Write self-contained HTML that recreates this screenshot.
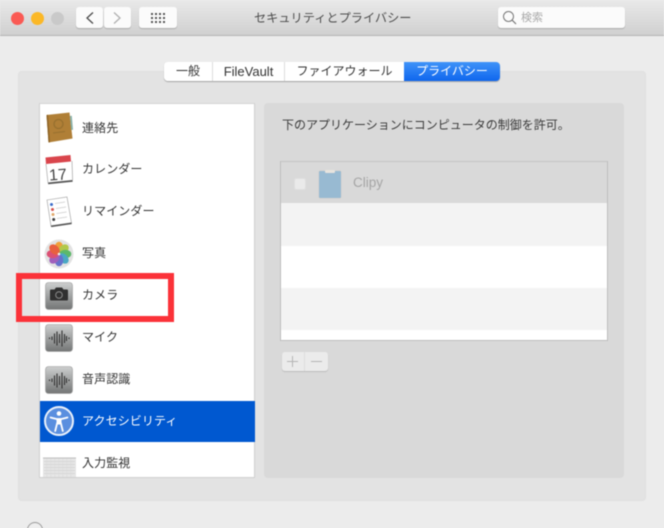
<!DOCTYPE html>
<html lang="ja">
<head>
<meta charset="utf-8">
<style>
html,body{margin:0;padding:0}
body{width:664px;height:528px;overflow:hidden;background:#ececec;position:relative;font-family:"Liberation Sans","Noto Sans CJK JP",sans-serif;color:#333;filter:blur(.45px)}
.a{position:absolute;box-sizing:border-box}
.t{position:absolute;white-space:nowrap;line-height:16px}
.btn{position:absolute;background:#fbfbfb;border-radius:3px;box-shadow:0 1px 1px rgba(0,0,0,.2)}
.lbl{position:absolute;left:82px;font-size:12px;line-height:16px;color:#333;white-space:nowrap;letter-spacing:.1px}
.seg{position:absolute;top:62px;height:19px;font-size:12px;line-height:19px;text-align:center;color:#333;background:#fff;border-right:1px solid #dcdcdc;box-sizing:border-box}
svg{position:absolute;overflow:visible}
</style>
</head>
<body>
<!-- title bar -->
<div class="a" style="left:0;top:0;width:664px;height:36px;background:linear-gradient(#e9e9e9,#d0d0d0);border-bottom:1px solid #b3b3b3"></div>
<div class="a" style="left:11px;top:12px;width:13px;height:13px;border-radius:50%;background:#fa5a54"></div>
<div class="a" style="left:31px;top:12px;width:13px;height:13px;border-radius:50%;background:#fbb827"></div>
<div class="a" style="left:51px;top:12px;width:13px;height:13px;border-radius:50%;background:#c9c9c9"></div>
<div class="btn" style="left:76px;top:7px;width:27px;height:21px"></div>
<div class="btn" style="left:104px;top:7px;width:27px;height:21px"></div>
<div class="btn" style="left:139px;top:7px;width:38px;height:21px"></div>
<svg style="left:0;top:0" width="200" height="36">
<path d="M93 12.5L87 18l6 5.5" fill="none" stroke="#4a4a4a" stroke-width="1.3"/>
<path d="M114 12.5l6 5.5-6 5.5" fill="none" stroke="#b0b0b0" stroke-width="1.3"/>
<g fill="#555">
<rect x="151" y="13" width="2" height="2"/><rect x="155" y="13" width="2" height="2"/><rect x="159" y="13" width="2" height="2"/><rect x="163" y="13" width="2" height="2"/>
<rect x="151" y="17" width="2" height="2"/><rect x="155" y="17" width="2" height="2"/><rect x="159" y="17" width="2" height="2"/><rect x="163" y="17" width="2" height="2"/>
<rect x="151" y="21" width="2" height="2"/><rect x="155" y="21" width="2" height="2"/><rect x="159" y="21" width="2" height="2"/><rect x="163" y="21" width="2" height="2"/>
</g>
</svg>
<div class="t" style="left:254px;top:10px;font-size:12.2px;color:#4c4c4c">セキュリティとプライバシー</div>
<div class="btn" style="left:498px;top:7px;width:127px;height:21px"></div>
<svg style="left:0;top:0" width="664" height="36">
<circle cx="508.5" cy="16.5" r="5" fill="none" stroke="#777" stroke-width="1"/>
<path d="M512 20l4 4" stroke="#777" stroke-width="1.2"/>
</svg>
<div class="t" style="left:521px;top:10px;font-size:11px;color:#a8a8a8">検索</div>

<!-- main panel -->
<div class="a" style="left:18px;top:71px;width:628px;height:430px;background:#e3e3e3;border-radius:4px;border:1px solid #dfdfdf"></div>

<!-- tabs -->
<div class="a" style="left:164px;top:62px;width:336px;height:19px;border-radius:4px;box-shadow:0 1px 1px rgba(0,0,0,.28)"></div>
<div class="seg" style="left:164px;width:49px;border-radius:4px 0 0 4px">一般</div>
<div class="seg" style="left:213px;width:72px;font-size:13px">FileVault</div>
<div class="seg" style="left:285px;width:119px;border-right:0">ファイアウォール</div>
<div class="seg" style="left:404px;width:96px;border:0;border-radius:0 4px 4px 0;color:#fff;background:linear-gradient(#3f93f8,#0f66ee)">プライバシー</div>

<!-- list -->
<div class="a" style="left:39px;top:103px;width:216px;height:375px;background:#fff;border:1px solid #cfcfcf;border-top-color:#d4d4d4"></div>
<div class="a" style="left:40px;top:401px;width:215px;height:41px;background:#0058d0"></div>

<div class="lbl" style="top:120px">連絡先</div>
<div class="lbl" style="top:161px">カレンダー</div>
<div class="lbl" style="top:203px">リマインダー</div>
<div class="lbl" style="top:245px">写真</div>
<div class="lbl" style="top:287px">カメラ</div>
<div class="lbl" style="top:329px">マイク</div>
<div class="lbl" style="top:371px">音声認識</div>
<div class="lbl" style="top:413px;color:#fff">アクセシビリティ</div>
<div class="lbl" style="top:455px">入力監視</div>

<svg style="left:0;top:0" width="664" height="528">
<defs>
<linearGradient id="g" x1="0" y1="0" x2="0" y2="1"><stop offset="0" stop-color="#cdcfcf"/><stop offset="1" stop-color="#737575"/></linearGradient>
</defs>
<!-- contacts -->
<path d="M46.500 115l23-2.500 3 26-24 4z" fill="#b07f36"/>
<path d="M46.500 115l2 27.500 1.500-.3-2-27.500z" fill="#8e6428"/>
<circle cx="58.500" cy="124" r="4.500" fill="none" stroke="#97702f" stroke-width="1.300"/>
<path d="M53 133l12-1.500" stroke="#97702f" stroke-width="1"/>
<path d="M70 116l1.800-.2 1.200 14-1.800.2z" fill="#88b0a8"/>
<!-- calendar -->
<path d="M46 157l25-2 1.500 25-24.500 2.500z" fill="#fff"/>
<path d="M45.500 157.500l25-2.500.500 6.500-25 2.500z" fill="#d9454c"/>
<path d="M48 182.500l24.500-2.500.200 1.800-24.500 2.500z" fill="#555"/>
<path d="M46 164l2 19" stroke="#999" stroke-width=".6"/>
<path d="M72 161l.6 19" stroke="#999" stroke-width=".6"/>
<text x="49" y="180" font-size="16" fill="#444" font-family="Liberation Sans" transform="rotate(-4 59 175)">17</text>
<!-- reminders -->
<path d="M47 200l20-3 4.500 26-20.500 3z" fill="#fff" stroke="#999" stroke-width=".6"/>
<path d="M51 225.500l20.500-3 .2 1.600-20.500 3z" fill="#555"/>
<circle cx="51.500" cy="204.500" r="1.500" fill="#3a6bc9"/><circle cx="52.500" cy="209.500" r="1.500" fill="#d6544f"/><circle cx="53" cy="214.500" r="1.500" fill="#e0a86a"/><circle cx="53.700" cy="219.500" r="1.500" fill="#3f3f3f"/>
<path d="M55 203.500l10-1.500M56 208.500l10-1.500M56.500 213.500l10-1.500M57 218.500l10-1.500" stroke="#ccc" stroke-width=".7"/>
<!-- photos -->
<circle cx="59" cy="254" r="14.500" fill="#e2e2e2"/>
<g transform="translate(59 254)">
<ellipse cx="0" cy="-6.300" rx="4.300" ry="6" fill="#f0a03a"/>
<ellipse cx="0" cy="-6.300" rx="4.300" ry="6" fill="#b2c84a" transform="rotate(45)"/>
<ellipse cx="0" cy="-6.300" rx="4.300" ry="6" fill="#5cb86a" transform="rotate(90)"/>
<ellipse cx="0" cy="-6.300" rx="4.300" ry="6" fill="#4aa8c4" transform="rotate(135)"/>
<ellipse cx="0" cy="-6.300" rx="4.300" ry="6" fill="#6672cc" transform="rotate(180)"/>
<ellipse cx="0" cy="-6.300" rx="4.300" ry="6" fill="#a060bc" transform="rotate(225)"/>
<ellipse cx="0" cy="-6.300" rx="4.300" ry="6" fill="#dc5074" transform="rotate(270)"/>
<ellipse cx="0" cy="-6.300" rx="4.300" ry="6" fill="#e8603f" transform="rotate(315)"/>
<circle r="1.300" fill="#f4f0e8"/>
</g>
<!-- camera tile -->
<rect x="45.500" y="282.500" width="27" height="27" rx="3" fill="url(#g)" stroke="#9a9a9a" stroke-width=".6"/>
<path d="M51 289.500h3.500l1.500-2h6l1.500 2H67a1 1 0 0 1 1 1v9a1 1 0 0 1-1 1H51a1 1 0 0 1-1-1v-9a1 1 0 0 1 1-1z" fill="#303030"/>
<circle cx="59" cy="295" r="3.300" fill="#303030" stroke="#8d8d8d" stroke-width="1"/>
<!-- mic tile -->
<rect x="45.500" y="324.500" width="27" height="27" rx="3" fill="url(#g)" stroke="#9a9a9a" stroke-width=".6"/>
<path d="M49.500 337.500v1.500M52 336.500v3.500M54.500 333.500v10M57 331.500v14M59.500 334v9M62 330.500v16M64.500 334v9M66.500 336v5M69 337.500v1.500" stroke="#333" stroke-width="1.100"/>
<!-- voice tile -->
<rect x="45.500" y="366.500" width="27" height="27" rx="3" fill="url(#g)" stroke="#9a9a9a" stroke-width=".6"/>
<path d="M49.500 379.500v1.500M52 378.500v3.500M54.500 375.500v10M57 373.500v14M59.500 376v9M62 372.500v16M64.500 376v9M66.500 378v5M69 379.500v1.500" stroke="#333" stroke-width="1.100"/>
<!-- accessibility -->
<circle cx="59" cy="421" r="14" fill="#5a8fdf" stroke="#eaf1fb" stroke-width="2"/>
<circle cx="59" cy="413.500" r="2.300" fill="#fff"/>
<path d="M50.500 417.500l6 1.500h5l6-1.500" fill="none" stroke="#fff" stroke-width="1.700" stroke-linecap="round" stroke-linejoin="round"/>
<path d="M56.500 418.500h5v6h-5z" fill="#fff"/>
<path d="M57.200 423l-2 8M60.800 423l2 8" fill="none" stroke="#fff" stroke-width="1.800" stroke-linecap="round"/>
<!-- keyboard -->
<rect x="43" y="458" width="33" height="19" fill="#e6e6e6"/>
<path d="M43 458h33" stroke="#bcbcbc"/>
<path d="M44 461.500h31M44 464.500h31M44 467.500h31M44 470.500h31M44 473.500h31" stroke="#d2d2d2" stroke-width=".7"/>
<path d="M47 459v18M51 459v18M55 459v18M59 459v18M63 459v18M67 459v18M71 459v18" stroke="#dadada" stroke-width=".6"/>
</svg>

<!-- right panel -->
<div class="a" style="left:264px;top:103px;width:360px;height:375px;background:#d9d9d9;border-radius:4px"></div>
<div class="t" style="left:282px;top:117px;font-size:12px;color:#3a3a3a">下のアプリケーションにコンピュータの制御を許可。</div>

<!-- table -->
<div class="a" style="left:280px;top:161px;width:328px;height:180px;background:#fff;border:1px solid #bdbdbd;border-top-color:#c4c4c4"></div>
<div class="a" style="left:281px;top:162px;width:326px;height:41px;background:#d9d9d9"></div>
<div class="a" style="left:281px;top:203px;width:326px;height:43px;background:#f3f3f3"></div>
<div class="a" style="left:281px;top:288px;width:326px;height:42px;background:#f3f3f3"></div>
<div class="a" style="left:294px;top:178px;width:12px;height:12px;background:#eaeaea;border-radius:2px;border:1px solid #dedede"></div>
<div class="a" style="left:319px;top:171px;width:22px;height:27px;background:#98bad2;border-radius:1px;box-shadow:0 0 1px #d9c6ae"></div>
<div class="a" style="left:325px;top:170px;width:10px;height:3px;background:#e8e4de;border-radius:1px"></div>
<div class="t" style="left:353px;top:175px;font-size:13.500px;color:#a5a5a5">Clipy</div>

<!-- + - -->
<div class="a" style="left:282px;top:352px;width:46px;height:19px;background:#ebebeb;border-radius:3px;box-shadow:0 1px 1px rgba(0,0,0,.14)"></div>
<div class="a" style="left:304px;top:352px;width:1px;height:19px;background:#dedede"></div>
<svg style="left:0;top:0" width="664" height="528">
<path d="M292.500 356v11M287 361.500h11M311 361.500h11" stroke="#b5b5b5" stroke-width="1"/>
<circle cx="35" cy="530" r="7.500" fill="#eee" stroke="#9a9a9a" stroke-width="1"/>
</svg>

<!-- red highlight -->
<div class="a" style="left:16px;top:273px;width:158px;height:49px;border:6.500px solid #fb3239"></div>
</body>
</html>
